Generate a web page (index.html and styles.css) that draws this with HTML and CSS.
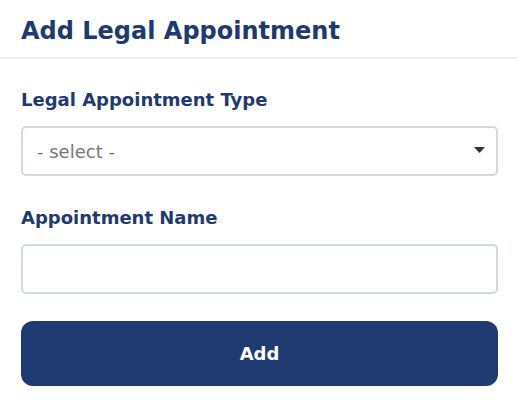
FILE: index.html
```html
<!DOCTYPE html>
<html lang="en">
<head>
    <meta charset="UTF-8">
    <meta name="viewport" content="width=device-width, initial-scale=1.0">
    <title>Add Legal Appointment</title>
    <link rel="stylesheet" href="styles.css">
</head>
<body>

    <div class="header">
        <h1>Add Legal Appointment</h1>
    </div>

    <form class="form" id="appointmentForm">
        <label class="field">
            <span class="field-label">Legal Appointment Type</span>
            <span class="select-wrap">
                <select name="type">
                    <option value="">- select -</option>
                </select>
                <svg class="caret" width="11" height="6" viewBox="0 0 11 6"><path d="M0 0h11L5.5 6z" fill="#333"/></svg>
            </span>
        </label>

        <label class="field field-last">
            <span class="field-label">Appointment Name</span>
            <input type="text" name="name">
        </label>

        <button type="button">Add</button>
    </form>

</body>
</html>
```

FILE: styles.css
```css
body {
    font-family: "DejaVu Sans", "Liberation Sans", sans-serif;
    background-color: #fff;
    margin: 0;
    color: #1e3a70;
}
.header {
    box-sizing: border-box;
    height: 59px;
    padding: 16px 21px 0;
    border-bottom: 2px solid #eef2f6;
}
h1 {
    margin: 0;
    font-size: 24px;
    line-height: 30px;
    font-weight: 700;
    color: #1e3a70;
}
.form {
    padding: 30px 19px 0 21px;
    display: flex;
    flex-direction: column;
}
.field {
    display: flex;
    flex-direction: column;
    margin-bottom: 31px;
}
.field-last {
    margin-bottom: 27px;
}
.field-label {
    font-size: 18px;
    line-height: 22px;
    font-weight: 700;
    margin-bottom: 15px;
}
.select-wrap {
    position: relative;
    display: block;
}
select,
input[type="text"] {
    display: block;
    width: 100%;
    box-sizing: border-box;
    height: 50px;
    padding: 0 14px;
    border: 2px solid #d1d8e0;
    border-radius: 5px;
    background: #fff;
    font-family: inherit;
    font-size: 18px;
    color: #787878;
    appearance: none;
    -webkit-appearance: none;
}
.caret {
    position: absolute;
    right: 13px;
    top: 21px;
    pointer-events: none;
}
button {
    height: 65px;
    width: 100%;
    background-color: #1f3a70;
    color: #fff;
    border: none;
    border-radius: 12px;
    font-family: inherit;
    font-size: 18px;
    font-weight: 700;
    cursor: pointer;
}
```
